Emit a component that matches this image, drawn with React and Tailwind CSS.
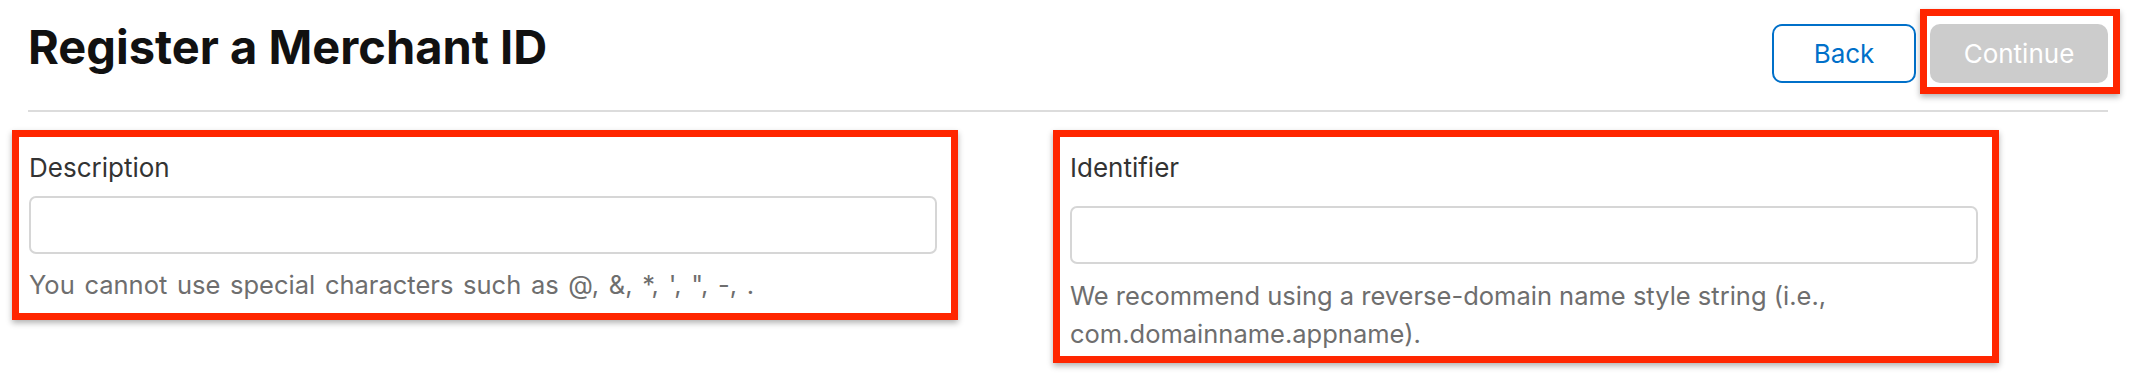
import React from 'react';

const font = { fontFamily: 'Inter, "Noto Sans", sans-serif' };

function Field({ label, hint, inputGap, hintGap, bottomPad, hintExtra = '' }) {
  return (
    <div
      className={`w-[946px] border-[7px] border-[#ff2600] bg-white pl-[10px] pr-[14px] pt-[15px] shadow-[0_3px_6px_rgba(0,0,0,0.3)] ${bottomPad}`}
    >
      <label className="block text-[26px] leading-[32px] text-[#333333]">{label}</label>
      <input
        type="text"
        className={`block h-[58px] w-[908px] rounded-[7px] border-2 border-[#d6d6d6] bg-white outline-none ${inputGap}`}
      />
      <p className={`text-[25.5px] leading-[38px] text-[#6e6e6e] ${hintGap} ${hintExtra}`}>{hint}</p>
    </div>
  );
}

export default function App() {
  return (
    <div className="h-[375px] w-full bg-white" style={font}>
      {/* header */}
      <div className="flex items-start justify-between pl-[28px] pr-[12px] pt-[9px]">
        <h1 className="mt-[13px] text-[47px] font-bold leading-[50px] text-[#111111]">
          Register a Merchant ID
        </h1>
        <div className="flex items-start">
          <button className="mt-[15px] h-[59px] w-[144px] rounded-[10px] border-2 border-[#0070c9] bg-white text-[26px] text-[#0070c9]">
            Back
          </button>
          <div className="ml-[4px] border-[7px] border-[#ff2600] pb-[4px] pl-[3px] pr-[5px] pt-[8px] shadow-[0_3px_6px_rgba(0,0,0,0.3)]">
            <button className="h-[59px] w-[178px] rounded-[10px] bg-[#cccccc] text-[26px] text-white">
              Continue
            </button>
          </div>
        </div>
      </div>

      <div className="ml-[28px] mr-[24px] mt-[16px] h-[2px] bg-[#dcdcdc]" />

      {/* fields */}
      <div className="ml-[12px] mt-[18px] flex items-start gap-[95px]">
        <Field
          label="Description"
          hint={`You cannot use special characters such as @, &, *, ', ", -, .`}
          inputGap="mt-[12px]"
          hintGap="mt-[12px]"
          bottomPad="pb-[9px]"
          hintExtra="[word-spacing:2.5px]"
        />
        <Field
          label="Identifier"
          hint="We recommend using a reverse-domain name style string (i.e., com.domainname.appname)."
          inputGap="mt-[22px]"
          hintGap="mt-[13px]"
          bottomPad="pb-[3px]"
        />
      </div>
    </div>
  );
}
